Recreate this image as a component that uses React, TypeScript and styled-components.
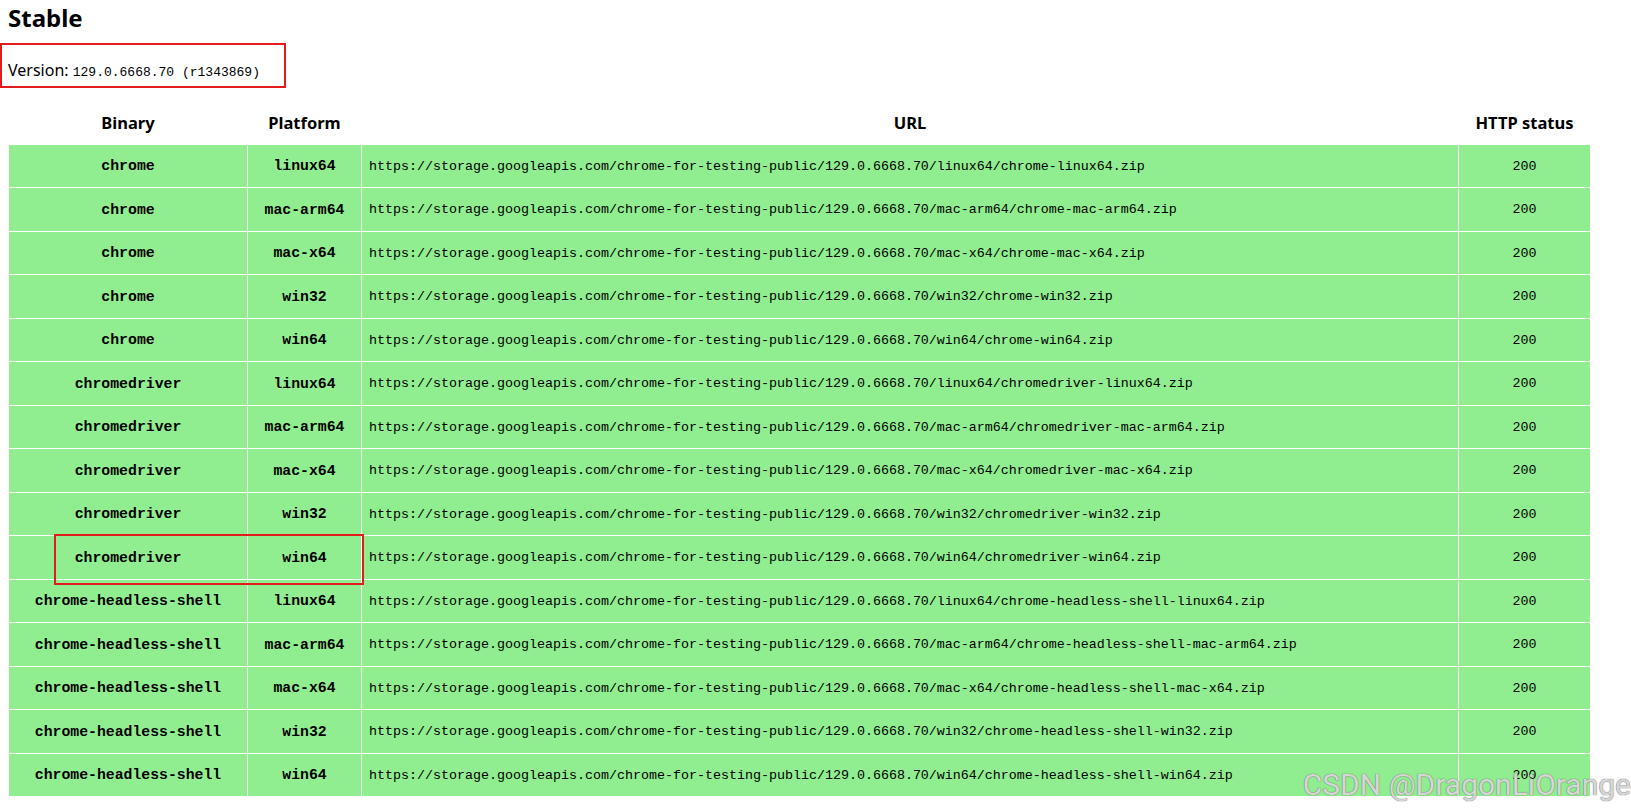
import styled, { createGlobalStyle } from 'styled-components';

const GlobalStyle = createGlobalStyle`
  * {
    box-sizing: border-box;
  }
  body {
    margin: 0;
    background: #fff;
    color: #000;
    font-family: "Noto Sans", "Open Sans", sans-serif;
  }
`;

const Page = styled.div`
  position: relative;
  min-height: 812px;
  padding: 0 8px;
  overflow: hidden;
`;

const Heading = styled.h2`
  margin: 0;
  font-size: 24px;
  line-height: 36px;
  font-weight: 700;
`;

const VersionBox = styled.div`
  width: 286px;
  height: 45px;
  margin: 7px 0 0 -8px;
  padding: 14px 0 0 6px;
  border: 2px solid #e41b1b;
`;

const VersionText = styled.p`
  margin: 0;
  font-size: 16px;
  line-height: 22px;
  white-space: nowrap;
`;

const Code = styled.code`
  font-family: "Liberation Mono", "DejaVu Sans Mono", monospace;
  font-size: 13px;
`;

const Table = styled.table`
  margin-top: 12px;
  width: 1583px;
  table-layout: fixed;
  border-collapse: separate;
  border-spacing: 1px;
`;

const HeadCell = styled.th<{ $width: number }>`
  width: ${p => p.$width}px;
  height: 42.5px;
  padding: 0;
  font-size: 16.5px;
  font-weight: 700;
  text-align: center;
  vertical-align: middle;
`;

const Cell = styled.td<{ $kind: 'strong' | 'url' | 'status'; $mark?: boolean }>`
  position: relative;
  height: 42.5px;
  padding: ${p => (p.$kind === 'url' ? '1px 0 0 7px' : '1px 0 0')};
  background: #90ee90;
  vertical-align: middle;
  white-space: nowrap;
  font-family: "Liberation Mono", "DejaVu Sans Mono", monospace;
  font-size: ${p => (p.$kind === 'strong' ? '14.8px' : '13.33px')};
  font-weight: ${p => (p.$kind === 'strong' ? 700 : 400)};
  text-align: ${p => (p.$kind === 'url' ? 'left' : 'center')};

  ${p =>
    p.$mark &&
    `
    z-index: 2;
    &::after {
      content: '';
      position: absolute;
      left: 45px;
      top: -2px;
      width: 306px;
      height: 47px;
      border: 2px solid #e41b1b;
      pointer-events: none;
    }
  `}
`;

const Watermark = styled.div`
  position: absolute;
  right: 0;
  top: 767px;
  z-index: 3;
  font-family: Roboto, "Noto Sans", sans-serif;
  font-size: 30px;
  line-height: 36px;
  color: rgba(225, 225, 225, 0.92);
  text-shadow: 0 0 1px rgba(110, 110, 110, 0.9), 0 0 1px rgba(110, 110, 110, 0.9);
  white-space: nowrap;
  pointer-events: none;
`;

const VERSION = '129.0.6668.70';
const BASE = `https://storage.googleapis.com/chrome-for-testing-public/${VERSION}`;
const binaries = ['chrome', 'chromedriver', 'chrome-headless-shell'];
const platforms = ['linux64', 'mac-arm64', 'mac-x64', 'win32', 'win64'];

const rows = binaries.flatMap(binary =>
  platforms.map(platform => ({
    binary,
    platform,
    url: `${BASE}/${platform}/${binary}-${platform}.zip`,
    status: 200,
  }))
);

const columns = [
  { label: 'Binary', width: 238 },
  { label: 'Platform', width: 113 },
  { label: 'URL', width: 1096 },
  { label: 'HTTP status', width: 131 },
];

const App: React.FC = () => {
  return (
    <>
      <GlobalStyle />
      <Page>
        <Heading>Stable</Heading>
        <VersionBox>
          <VersionText>
            Version: <Code>{VERSION} (r1343869)</Code>
          </VersionText>
        </VersionBox>
        <Table>
          <thead>
            <tr>
              {columns.map(col => (
                <HeadCell key={col.label} $width={col.width}>
                  {col.label}
                </HeadCell>
              ))}
            </tr>
          </thead>
          <tbody>
            {rows.map(row => (
              <tr key={row.url}>
                <Cell
                  $kind="strong"
                  $mark={row.binary === 'chromedriver' && row.platform === 'win64'}
                >
                  {row.binary}
                </Cell>
                <Cell $kind="strong">{row.platform}</Cell>
                <Cell $kind="url">{row.url}</Cell>
                <Cell $kind="status">{row.status}</Cell>
              </tr>
            ))}
          </tbody>
        </Table>
        <Watermark>CSDN @DragonLiOrange</Watermark>
      </Page>
    </>
  );
};

export default App;
